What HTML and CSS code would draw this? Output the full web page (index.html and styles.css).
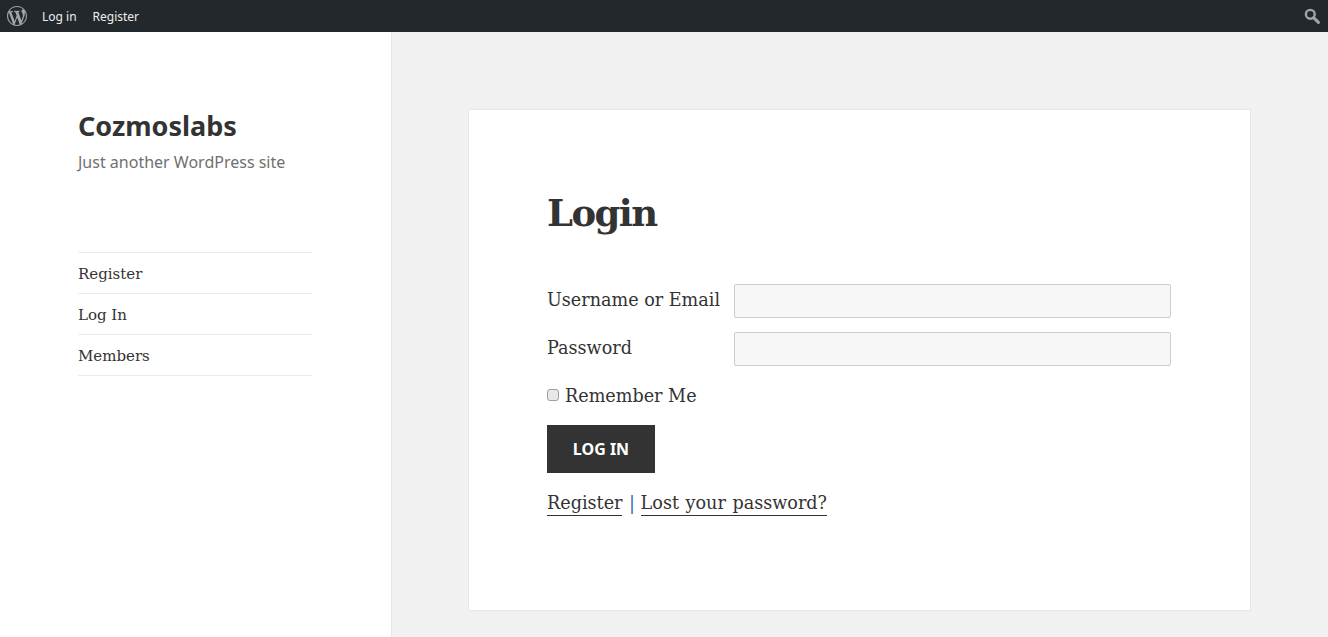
FILE: index.html
```html
<!DOCTYPE html>
<html lang="en">
<head>
<meta charset="utf-8">
<title>Login – Cozmoslabs</title>
<link rel="stylesheet" href="styles.css">
</head>
<body>
<header class="adminbar">
  <a class="wp-logo" href="#" aria-label="WordPress">
    <svg viewBox="0 0 20 20" width="20" height="20"><path fill="#a0a5aa" d="M20 10c0-5.51-4.49-10-10-10C4.48 0 0 4.49 0 10c0 5.52 4.48 10 10 10 5.51 0 10-4.48 10-10zM7.78 15.37L4.37 6.22c.55-.02 1.17-.08 1.17-.08.5-.06.44-1.13-.06-1.11 0 0-1.45.11-2.37.11-.18 0-.37 0-.58-.01C4.12 2.69 6.87 1.11 10 1.11c2.33 0 4.45.87 6.05 2.34-.68-.11-1.65.39-1.65 1.58 0 .74.45 1.36.9 2.1.35.61.55 1.36.55 2.46 0 1.49-1.4 5-1.4 5l-3.03-8.37c.54-.02.82-.17.82-.17.5-.05.44-1.25-.06-1.22 0 0-1.44.12-2.38.12-.87 0-2.33-.12-2.33-.12-.5-.03-.56 1.2-.06 1.22l.92.08 1.26 3.41zM17.41 10c.24-.64.74-1.87.43-4.25.7 1.29 1.05 2.71 1.05 4.25 0 3.29-1.73 6.24-4.4 7.78.97-2.59 1.94-5.2 2.92-7.78zM6.1 18.09C3.12 16.65 1.11 13.53 1.11 10c0-1.3.23-2.48.72-3.59C3.25 10.3 4.67 14.2 6.1 18.09zm4.03-6.63l2.58 6.98c-.86.29-1.76.45-2.71.45-.79 0-1.57-.11-2.29-.33.81-2.38 1.62-4.74 2.42-7.1z"/></svg>
  </a>
  <a class="bar-link" href="#">Log in</a>
  <a class="bar-link" href="#">Register</a>
  <a class="bar-search" href="#" aria-label="Search">
    <svg viewBox="0 0 16 16" width="16" height="16"><circle cx="6.3" cy="6.3" r="4.4" fill="none" stroke="#a0a5aa" stroke-width="2.4"/><path d="M9.6 9.6L14.4 14.4" stroke="#a0a5aa" stroke-width="3" stroke-linecap="round"/></svg>
  </a>
</header>
<div class="page">
  <aside class="sidebar">
    <h1 class="site-title">Cozmoslabs</h1>
    <p class="site-desc">Just another WordPress site</p>
    <ul class="menu">
      <li><a href="#">Register</a></li>
      <li><a href="#">Log In</a></li>
      <li><a href="#">Members</a></li>
    </ul>
  </aside>
  <main class="content">
    <article class="card">
      <h2 class="card-title">Login</h2>
      <form class="login">
        <div class="field"><label for="u">Username or Email</label><input id="u" type="text"></div>
        <div class="field"><label for="p">Password</label><input id="p" type="password"></div>
        <label class="remember"><input type="checkbox"> Remember Me</label>
        <button class="submit" type="button">LOG IN</button>
        <p class="links"><a href="#">Register</a> <span class="sep">|</span> <a href="#">Lost your password?</a></p>
      </form>
    </article>
  </main>
</div>
</body>
</html>
```
FILE: styles.css
```css
* { box-sizing: border-box; }
html, body { margin: 0; height: 100%; }
body {
  background: #f1f1f1;
  color: #333;
  font-family: "DejaVu Serif", serif;
  overflow: hidden;
}
a { color: inherit; text-decoration: none; }

.adminbar {
  display: flex;
  align-items: center;
  height: 32px;
  background: #23282d;
  color: #eee;
  font: 12px/30px "Noto Sans", sans-serif;
}
.wp-logo { display: flex; margin: 0 7px 0 7px; }
.bar-link { padding: 2px 8px 0; }
.bar-search { display: flex; margin-left: auto; margin-right: 8px; }

.page { display: flex; height: 605px; }
.sidebar {
  width: 392px;
  flex: none;
  background: #fff;
  border-right: 1px solid #e8e8e8;
  padding: 74px 79px 0 78px;
}
.site-title {
  margin: 0;
  font: 700 27px/40px "Noto Sans", sans-serif;
  color: #333;
}
.site-desc {
  margin: 0;
  font: 16px/32px "Noto Sans", sans-serif;
  color: #707070;
}
.menu { list-style: none; margin: 74px 0 0; padding: 0; border-top: 1px solid #eaeaea; }
.menu li { border-bottom: 1px solid #eaeaea; font-size: 15px; line-height: 42px; height: 41px; }

.content { flex: 1; padding: 78px 78px 0 77px; }
.card {
  height: 500px;
  background: #fff;
  box-shadow: 0 0 1px rgba(0, 0, 0, .25);
  padding: 79px 79px 0 78px;
}
.card-title { margin: 0 0 47px; font-size: 37px; letter-spacing: -1.6px; font-weight: 700; line-height: 48px; }
.login { display: flex; flex-direction: column; align-items: flex-start; }
.field { display: flex; width: 100%; height: 34px; margin-bottom: 14px; font-size: 17.6px; line-height: 32px; }
.field label { width: 187px; flex: none; }
.field input {
  flex: 1;
  height: 34px;
  background: #f7f7f7;
  border: 1px solid #ccc;
  border-radius: 2px;
  padding: 0;
}
.remember { display: flex; align-items: center; gap: 6px; height: 30px; padding-top: 2px; font-size: 17.6px; }
.remember input {
  appearance: none;
  width: 12px;
  height: 12px;
  margin: 0 0 2px;
  background: #e8e8e8;
  border: 1px solid #a0a0a0;
  border-radius: 3px;
}
.submit {
  width: 108px;
  height: 48px;
  margin-top: 15px;
  background: #333;
  color: #fff;
  border: 0;
  font: 700 16px "Noto Sans", sans-serif;
}
.links { margin: 17px 0 0; font-size: 17.6px; line-height: 26px; word-spacing: 1px; }
.links a { border-bottom: 1px solid #333; padding-bottom: 2px; }
.sep { color: #2a6ea8; margin: 0 -1px 0 0; }
```
